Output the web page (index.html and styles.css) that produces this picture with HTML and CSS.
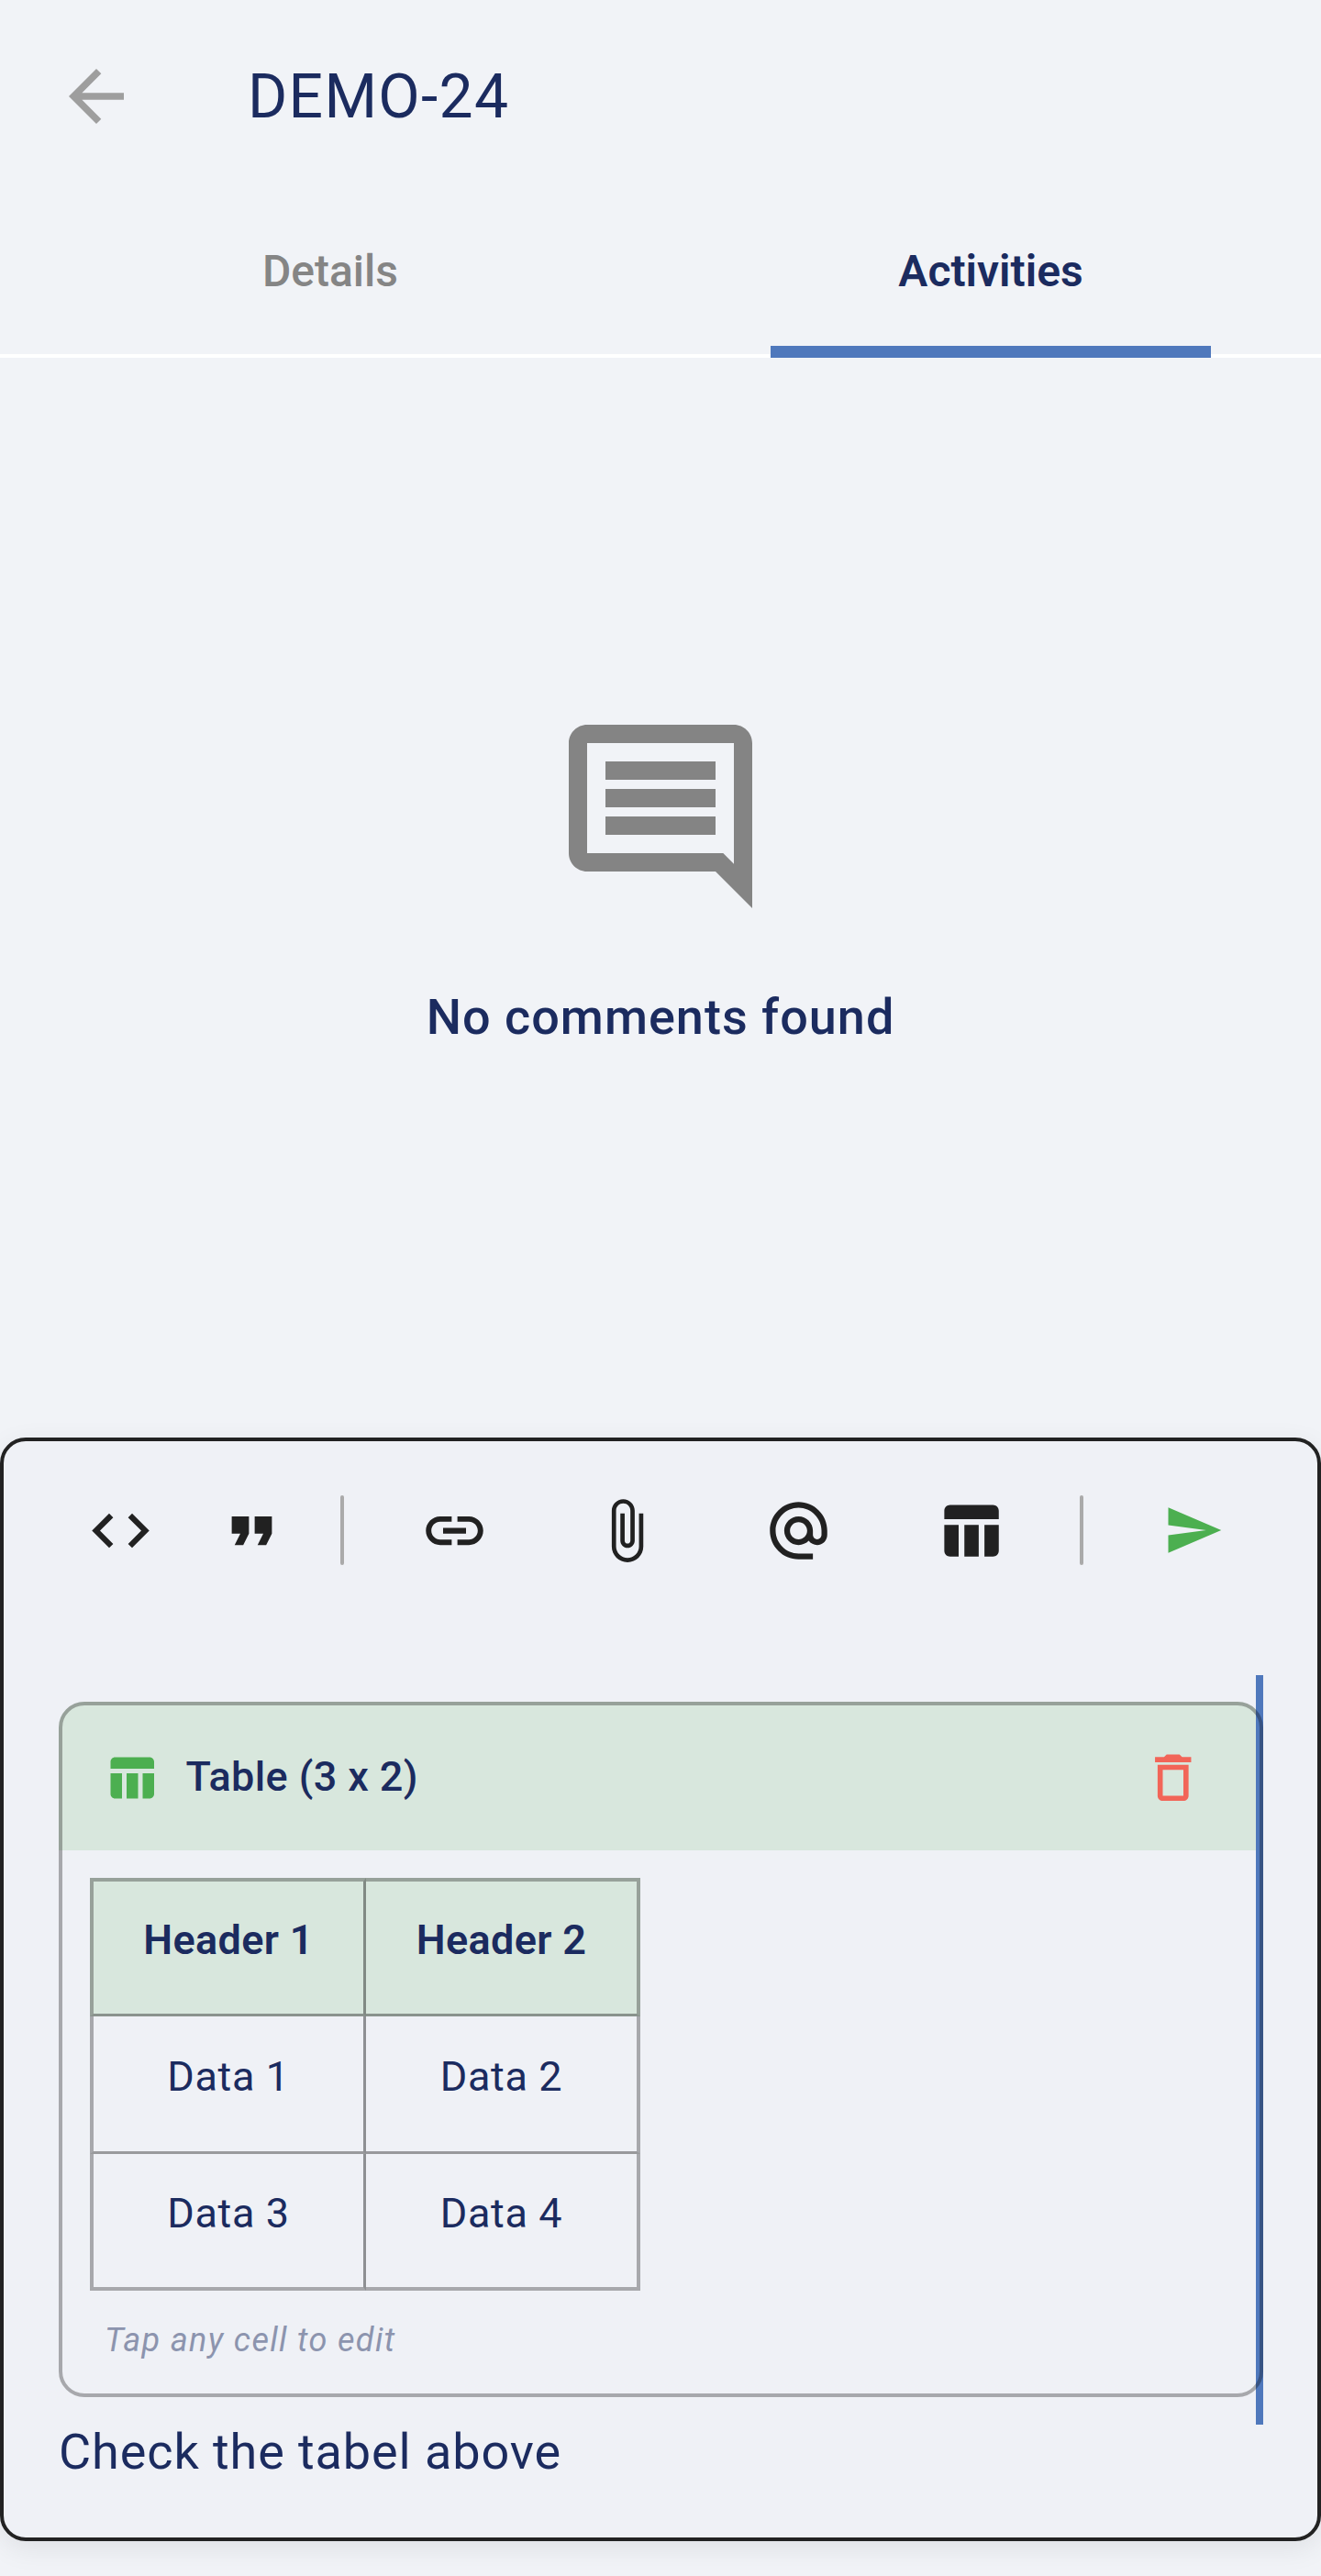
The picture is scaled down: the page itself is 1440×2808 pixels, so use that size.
FILE: index.html
```html
<!DOCTYPE html>
<html lang="en">
<head>
  <meta charset="UTF-8" />
  <title>DEMO-24</title>
  <link rel="stylesheet" href="styles.css">
</head>
<body>
  <div class="page">
    <header class="topbar">
      <svg class="back-icon" viewBox="0 0 24 24"><path d="M20 11H7.83l5.59-5.59L12 4l-8 8 8 8 1.41-1.41L7.83 13H20v-2z"/></svg>
      <h1 class="title">DEMO-24</h1>
    </header>

    <nav class="tabs">
      <div class="tab">Details</div>
      <div class="tab active">Activities</div>
    </nav>

    <main class="empty">
      <svg class="empty-icon" viewBox="0 0 24 24"><path d="M22 4c0-1.1-.9-2-2-2H4c-1.1 0-2 .9-2 2v12c0 1.1.9 2 2 2h14l4 4V4zm-2 0v13.17L18.83 16H4V4h16zM6 12h12v2H6zm0-3h12v2H6zm0-3h12v2H6z"/></svg>
      <p class="empty-text">No comments found</p>
    </main>

    <section class="composer">
      <div class="toolbar">
        <svg class="tool tool-code" viewBox="0 0 24 24"><path d="M9.4 16.6L4.8 12l4.6-4.6L8 6l-6 6 6 6 1.4-1.4zm5.2 0l4.6-4.6-4.6-4.6L16 6l6 6-6 6-1.4-1.4z"/></svg>
        <svg class="tool tool-quote" viewBox="0 0 24 24"><path d="M6 17h3l2-4V7H5v6h3zm8 0h3l2-4V7h-6v6h3z"/></svg>
        <span class="divider divider-first"></span>
        <svg class="tool tool-link" viewBox="0 0 24 24"><path d="M3.9 12c0-1.71 1.39-3.1 3.1-3.1h4V7H7c-2.76 0-5 2.24-5 5s2.24 5 5 5h4v-1.9H7c-1.71 0-3.1-1.39-3.1-3.1zM8 13h8v-2H8v2zm9-6h-4v1.9h4c1.71 0 3.1 1.39 3.1 3.1s-1.39 3.1-3.1 3.1h-4V17h4c2.76 0 5-2.24 5-5s-2.24-5-5-5z"/></svg>
        <svg class="tool tool-wide" viewBox="0 0 24 24"><path d="M16.5 6v11.5c0 2.21-1.79 4-4 4s-4-1.79-4-4V5c0-1.38 1.12-2.5 2.5-2.5s2.5 1.12 2.5 2.5v10.5c0 .55-.45 1-1 1s-1-.45-1-1V6H10v9.5c0 1.38 1.12 2.5 2.5 2.5s2.5-1.12 2.5-2.5V5c0-2.21-1.79-4-4-4S7 2.79 7 5v12.5c0 3.04 2.46 5.5 5.5 5.5s5.5-2.46 5.5-5.5V6h-1.5z"/></svg>
        <svg class="tool tool-wide" viewBox="0 0 24 24"><path d="M12 2C6.48 2 2 6.48 2 12s4.48 10 10 10h5v-2h-5c-4.34 0-8-3.66-8-8s3.66-8 8-8 8 3.66 8 8v1.43c0 .79-.71 1.57-1.5 1.57s-1.5-.78-1.5-1.57V12c0-2.76-2.24-5-5-5s-5 2.24-5 5 2.24 5 5 5c1.38 0 2.64-.56 3.54-1.47.65.89 1.77 1.47 2.96 1.47 1.97 0 3.5-1.6 3.5-3.57V12c0-5.52-4.48-10-10-10zm0 13c-1.66 0-3-1.34-3-3s1.34-3 3-3 3 1.34 3 3-1.34 3-3 3z"/></svg>
        <svg class="tool tool-wide" viewBox="0 0 24 24"><path d="M10 10.02h5V21h-5zM17 21h3c1.1 0 2-.9 2-2v-9h-5v11zm3-18H5c-1.1 0-2 .9-2 2v3h19V5c0-1.1-.9-2-2-2zM3 19c0 1.1.9 2 2 2h3V10H3v9z"/></svg>
        <span class="divider divider-last"></span>
        <svg class="send-icon" viewBox="0 0 24 24"><path d="M2.01 21L23 12 2.01 3 2 10l15 2-15 2z"/></svg>
      </div>

      <div class="editor">
        <div class="cursor-bar"></div>
        <div class="table-card">
          <div class="card-head">
            <svg class="card-icon" viewBox="0 0 24 24"><path d="M10 10.02h5V21h-5zM17 21h3c1.1 0 2-.9 2-2v-9h-5v11zm3-18H5c-1.1 0-2 .9-2 2v3h19V5c0-1.1-.9-2-2-2zM3 19c0 1.1.9 2 2 2h3V10H3v9z"/></svg>
            <span class="card-title">Table (3 x 2)</span>
            <svg class="trash-icon" viewBox="0 0 24 24"><path d="M6 19c0 1.1.9 2 2 2h8c1.1 0 2-.9 2-2V7H6v12zM8 9h8v10H8V9zm7.5-5l-1-1h-5l-1 1H5v2h14V4h-3.5z"/></svg>
          </div>
          <div class="card-body">
            <table class="mini-table">
              <tr class="row-head"><th>Header 1</th><th>Header 2</th></tr>
              <tr class="row-mid"><td>Data 1</td><td>Data 2</td></tr>
              <tr class="row-last"><td>Data 3</td><td>Data 4</td></tr>
            </table>
            <p class="hint">Tap any cell to edit</p>
          </div>
        </div>
        <p class="message">Check the tabel above</p>
      </div>
    </section>
  </div>
</body>
</html>
```

FILE: styles.css
```css
* { box-sizing: border-box; }
html, body { margin: 0; padding: 0; }
body { font-family: Roboto, "Noto Sans", sans-serif; background: #f1f3f7; color: #1b2b5f; }
svg { display: block; fill: currentColor; }
p, h1 { margin: 0; }

.page { width: 1440px; height: 2808px; display: flex; flex-direction: column; overflow: hidden; }

.topbar { height: 210px; padding: 0 0 0 60px; display: flex; align-items: center; }
.back-icon { width: 90px; height: 90px; color: #9e9e9e; }
.title { margin-left: 120px; padding-top: 2px; font-size: 66px; font-weight: 400; line-height: 1; letter-spacing: 1.3px; }

.tabs { height: 180px; display: flex; border-bottom: 4px solid #fff; }
.tab { width: 720px; height: 176px; padding-bottom: 6px; display: flex; align-items: center; justify-content: center; font-size: 48px; font-weight: 500; color: #858585; position: relative; }
.tab.active { color: #1b2b5f; font-weight: 600; }
.tab.active::after { content: ""; position: absolute; left: 120px; width: 480px; bottom: -4px; height: 13px; background: #4f78bc; }

.empty { flex: 1; display: flex; flex-direction: column; align-items: center; padding-top: 380px; }
.empty-icon { width: 240px; height: 240px; color: #848484; }
.empty-text { margin-top: 67px; font-size: 54px; font-weight: 500; line-height: 64px; letter-spacing: 1px; }

.composer { height: 1203px; margin-bottom: 38px; background: #eff1f6; border: 4px solid #222; border-radius: 28px; box-shadow: 0 8px 30px rgba(0, 0, 0, .08); }

.toolbar { height: 195px; display: flex; align-items: center; padding-left: 89.5px; padding-bottom: 1px; color: #212121; }
.tool { width: 75px; height: 75px; flex: none; }
.tool-quote { margin-left: 68px; }
.tool-link { margin-left: 82.5px; }
.tool-wide { margin-left: 112.5px; }
.divider { width: 4px; height: 76px; background: #aaa; border-radius: 2px; flex: none; }
.divider-first { margin-left: 59.5px; }
.divider-last { margin-left: 82px; }
.send-icon { width: 66px; height: 66px; margin-left: 87px; color: #4caf50; }

.editor { position: relative; padding: 89px 59px 0 60px; }
.cursor-bar { position: absolute; z-index: 1; top: 60px; right: 59px; width: 8px; height: 817px; background: #4f78bc; }

.table-card { position: relative; height: 758px; }
.table-card::after { content: ""; position: absolute; z-index: 2; inset: 0; border: 4px solid rgba(0, 0, 0, .3); border-radius: 28px; }
.card-head { height: 162px; padding: 4px 65px 0 48.5px; display: flex; align-items: center; background: #d8e7dd; border-radius: 28px 28px 0 0; }
.card-icon { width: 60px; height: 60px; color: #4caf50; }
.card-title { margin-left: 30px; padding-bottom: 4px; font-size: 45px; font-weight: 500; letter-spacing: .4px; }
.trash-icon { width: 67.5px; height: 67.5px; margin-left: auto; color: #f26558; }

.card-body { padding: 30px 0 0 34px; }
.mini-table { border-collapse: separate; border-spacing: 0; width: 600px; table-layout: fixed; }
.mini-table th, .mini-table td { padding: 0 0 16px; text-align: center; font-size: 45px; border-right: 4px solid rgba(0, 0, 0, .3); border-bottom: 3px solid rgba(0, 0, 0, .36); }
.mini-table th:first-child, .mini-table td:first-child { width: 301px; border-left: 4px solid rgba(0, 0, 0, .3); border-right: 3px solid rgba(0, 0, 0, .4); }
.mini-table th { padding-bottom: 18px; background: #d8e7dd; font-weight: 600; letter-spacing: .3px; border-top: 4px solid rgba(0, 0, 0, .3); }
.mini-table td { font-weight: 400; letter-spacing: .6px; }
.row-head th { height: 151px; }
.row-mid td { height: 150px; }
.row-last td { height: 149px; border-bottom: 4px solid rgba(0, 0, 0, .3); }
.hint { margin-top: 33px; padding-left: 16px; font-size: 36px; font-style: italic; line-height: 42px; color: #8c94ae; letter-spacing: 1.35px; }

.message { margin-top: 25px; font-size: 54px; line-height: 70px; letter-spacing: .9px; }
```
